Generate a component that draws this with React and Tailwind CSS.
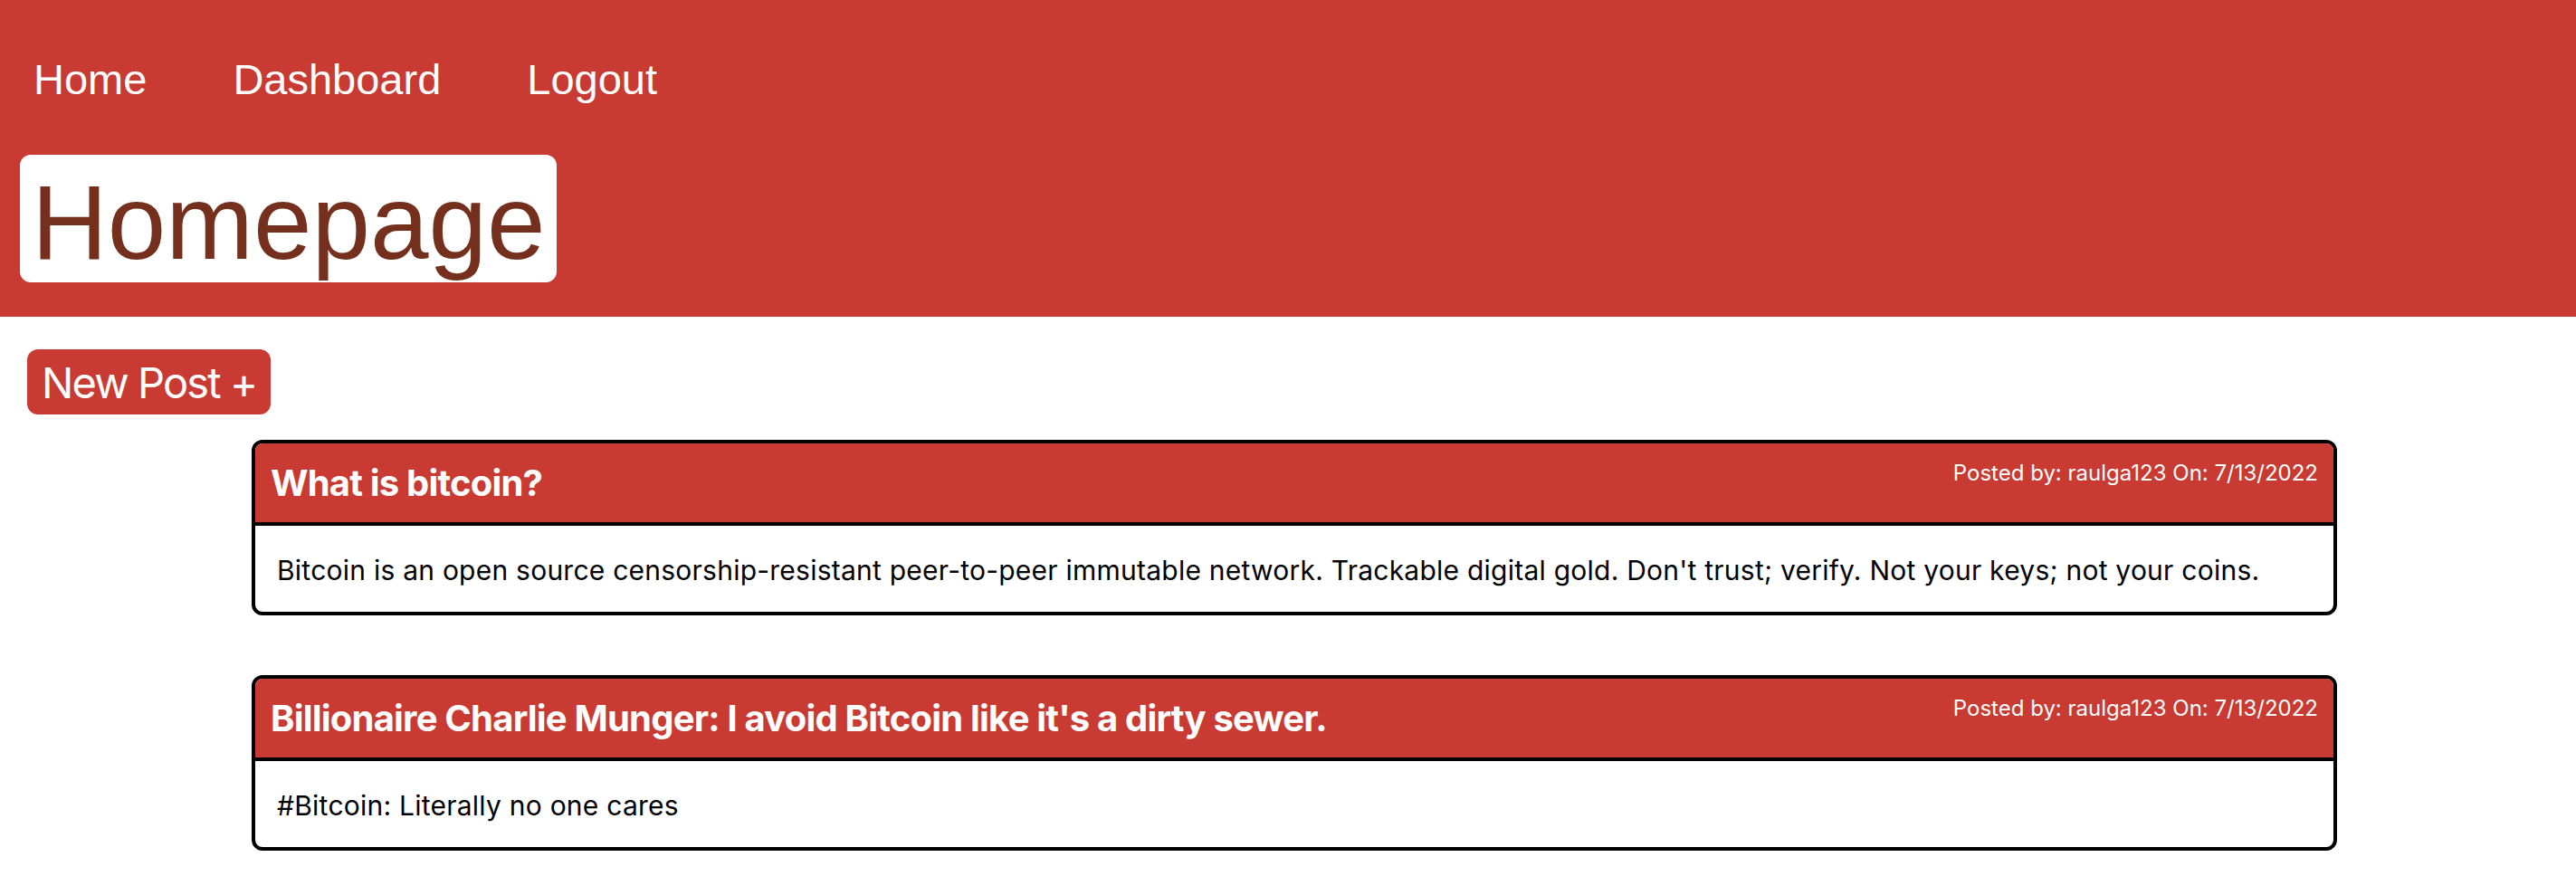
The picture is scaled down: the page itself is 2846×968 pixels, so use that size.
import React from "react";

const posts = [
  {
    id: 1,
    title: "What is bitcoin?",
    author: "raulga123",
    date: "7/13/2022",
    body: "Bitcoin is an open source censorship-resistant peer-to-peer immutable network. Trackable digital gold. Don't trust; verify. Not your keys; not your coins.",
  },
  {
    id: 2,
    title: "Billionaire Charlie Munger: I avoid Bitcoin like it's a dirty sewer.",
    author: "raulga123",
    date: "7/13/2022",
    body: "#Bitcoin: Literally no one cares",
  },
];

const PostCard = ({ post }) => (
  <div className="w-[2304px] overflow-hidden rounded-[12px] border-[4px] border-black bg-white">
    <div className="flex items-start justify-between border-b-[4px] border-black bg-[#c93a32] px-[17px] pt-[18px] pb-[19px]">
      <h2 className="mt-[2px] text-[40px] font-bold leading-[48px] tracking-[-0.02em] text-white">
        {post.title}
      </h2>
      <span className="text-[24px] leading-[29px] text-white">
        Posted by: {post.author} On: {post.date}
      </span>
    </div>
    <p className="pl-[24px] pr-4 pt-[31px] pb-[28px] text-[30px] leading-[36px] tracking-[0.008em] text-black">
      {post.body}
    </p>
  </div>
);

const App = () => {
  return (
    <div className="min-h-screen bg-white font-['Inter',sans-serif]">
      <header className="bg-[#c93a32] pt-[61px] pb-[38px] font-['Liberation_Sans',Arial,sans-serif]">
        <nav className="flex gap-[95px] pl-[37px] text-[47px] leading-[54px] text-white">
          <a href="#">Home</a>
          <a href="#">Dashboard</a>
          <a href="#">Logout</a>
        </nav>
        <div className="ml-[22px] mt-[56px] inline-block rounded-[12px] bg-white px-[13px] pt-[10px]">
          <h1 className="text-[116px] leading-[131px] text-[#74301d]">Homepage</h1>
        </div>
      </header>

      <div className="pl-[30px] pt-[36px]">
        <button
          type="button"
          className="rounded-[12px] bg-[#c93a32] px-[16px] pt-[8px] pb-[6px] text-[47px] leading-[58px] tracking-[-0.04em] text-white"
        >
          New Post +
        </button>
      </div>

      <div className="flex flex-col gap-[66px] pl-[278px] pt-[28px] pb-10">
        {posts.map((post) => (
          <PostCard key={post.id} post={post} />
        ))}
      </div>
    </div>
  );
};

export default App;
